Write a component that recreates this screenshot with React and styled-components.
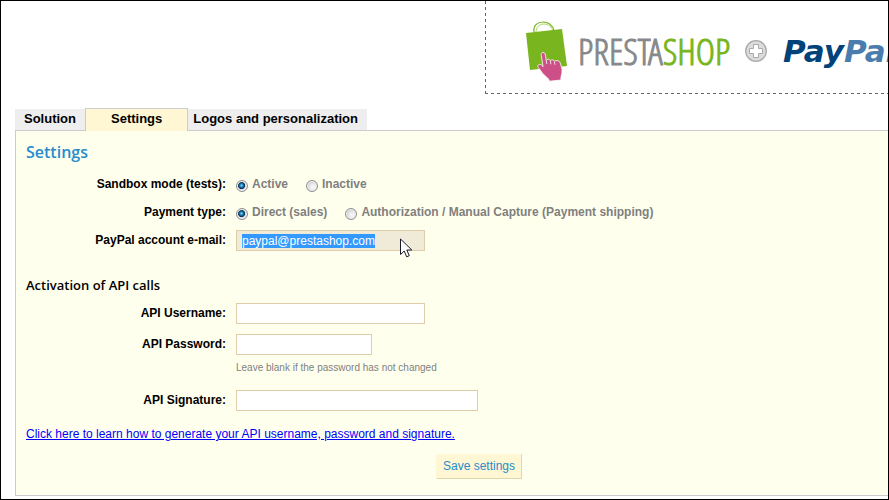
import React, { useEffect, useRef, useState } from "react";
import styled, { createGlobalStyle } from "styled-components";

const GlobalStyle = createGlobalStyle`
  * {
    box-sizing: border-box;
  }
  body {
    margin: 0;
    background: #fff;
    font-family: "Liberation Sans", Arial, sans-serif;
    font-size: 12px;
    color: #000;
  }
`;

const Page = styled.div`
  display: flex;
  flex-direction: column;
  min-height: 100vh;
  padding-bottom: 3px;
  border: 1px solid #000;
  overflow: hidden;
`;

const Banner = styled.header`
  display: flex;
  align-items: center;
  height: 93px;
  margin-left: 484px;
  padding: 7px 0 0 41px;
  background:
    repeating-linear-gradient(to bottom, #666 0 3px, transparent 3px 6px) left top / 1px 100% no-repeat,
    repeating-linear-gradient(to right, #666 0 3px, transparent 3px 6px) left bottom / 100% 1px no-repeat;
  overflow: hidden;
  white-space: nowrap;
  svg {
    flex: none;
  }
`;

const PrestaShopName = styled.span`
  flex: none;
  width: 151px;
  margin: 0 16px 0 10px;
  font-family: "Open Sans Condensed Light", "Open Sans Condensed", "Liberation Sans Narrow", sans-serif;
  font-size: 37px;
  font-weight: 300;
  line-height: 36px;
  color: #87888a;
  -webkit-text-stroke: 1px currentColor;
  em {
    font-style: normal;
    color: #78b51e;
  }
`;

const PayPalName = styled.span`
  flex: none;
  margin-left: 16px;
  font-family: "DejaVu Sans", sans-serif;
  font-size: 31px;
  font-weight: 700;
  font-style: italic;
  line-height: 36px;
  color: #00427a;
  span {
    color: #4a7dae;
  }
`;

const Tabs = styled.nav`
  display: flex;
  align-items: flex-end;
  height: 22px;
  margin: 14px 0 0 14px;
`;

const Tab = styled.button`
  position: relative;
  height: ${({ $active }) => ($active ? 23 : 21)}px;
  margin: 0 0 ${({ $active }) => ($active ? -1 : 0)}px;
  padding: ${({ $active }) => ($active ? "0 25px 4px" : "0 8px 4px")};
  border: 1px solid ${({ $active }) => ($active ? "#ccc" : "#eee")};
  border-bottom: 0;
  background: ${({ $active }) => ($active ? "#fff6d3" : "#eee")};
  font: bold 13px "Liberation Sans", Arial, sans-serif;
  color: #000;
  &:last-child {
    padding-left: 4px;
  }
`;

const Panel = styled.form`
  flex: 1;
  margin-left: 14px;
  padding: 11px 10px 15px;
  border: 1px solid #ccc;
  border-right: 0;
  background: #ffffee;
`;

const Title = styled.h2`
  margin: 0 0 12px;
  font: 600 16px/20px "Open Sans", sans-serif;
  color: #268ccd;
`;

const SectionTitle = styled.h3`
  margin: 24px 0 8px;
  font: 600 13px/20px "Open Sans", sans-serif;
`;

const Fields = styled.div`
  display: grid;
  gap: ${({ $gap }) => $gap}px;
`;

const Row = styled.div`
  display: grid;
  grid-template-columns: 200px 1fr;
  column-gap: 10px;
`;

const Name = styled.label`
  font-weight: bold;
  line-height: 20px;
  text-align: right;
`;

const Options = styled.div`
  display: flex;
  gap: 18px;
  height: 21px;
`;

const Option = styled.label`
  display: flex;
  align-items: flex-start;
  gap: 4px;
  font-weight: bold;
  line-height: 20px;
  color: #7f7f7f;
`;

const Radio = styled.input`
  appearance: none;
  width: 12px;
  height: 12px;
  margin: 6px 0 0;
  border: 1px solid #8e8f8f;
  border-radius: 50%;
  background: radial-gradient(circle at 60% 60%, #f4f4f4 20%, #b9bdc4 90%);
  box-shadow: inset 0 0 0 1px #f4f4f4;
  &:checked {
    background: radial-gradient(circle at 45% 45%, #8fe0f8 0, #1e83bb 20%, #0b2f4c 42%, #d5dadf 50%);
  }
`;

const TextBox = styled.input`
  display: block;
  width: ${({ $width }) => $width}px;
  height: 21px;
  padding: 0 5px;
  border: 1px solid #dfcca9;
  background: ${({ $filled }) => ($filled ? "#f0ead8" : "#fff")};
  font: 12px "Liberation Sans", Arial, sans-serif;
  color: #000;
  outline: none;
  &::selection {
    background: #3399ff;
    color: #fff;
  }
`;

const PointerArea = styled.div`
  position: relative;
`;

const Pointer = styled.svg`
  position: absolute;
  left: 164px;
  top: 8px;
  pointer-events: none;
`;

const Hint = styled.p`
  margin: 6px 0 5px;
  font-size: 10px;
  line-height: 14px;
  color: #7f7f7f;
`;

const HelpLink = styled.a`
  display: block;
  width: fit-content;
  margin: 15px 0 12px;
  line-height: 16px;
  color: #00f;
`;

const Actions = styled.div`
  padding-left: 410px;
`;

const SaveButton = styled.button`
  height: 25px;
  padding: 0 6px 2px;
  border: 1px solid #fff6d3;
  border-right-color: #dfd5af;
  border-bottom-color: #dfd5af;
  background: #fff6d3;
  font: 12px "Liberation Sans", Arial, sans-serif;
  color: #268ccd;
`;

const BagLogo = () => (
  <svg width="42" height="62" viewBox="0 0 42 62" aria-hidden="true">
    <path d="M8 12C7 5 12 2 17 2s10 3 11 9" fill="none" stroke="#78b51e" strokeWidth="1.2" />
    <path d="M10 12C10 7 14 4 18 4s8 3 9 7" fill="none" stroke="#a9d36c" strokeWidth="1" />
    <path d="M0 13L36 9l5 37-37 4z" fill="#78b51e" />
    <path
      d="M17 32.500c1.500 0 2.200 1 2.400 2.500l.8 5.500c1-1.800 3.600-1.600 4.200.2 1.200-1.400 3.400-1 4 .6 1.400-1.400 5.400-.8 5.800 1.600.6 2.600 2.400 5.600 1.800 9.600-.3 2.500-1.400 3.500-1 7.500l-11.500 1.200c-.6-2-1.600-3-3-4.200-3.500-2.500-5.500-6-8.200-9.500-1.500-2 .8-4.200 3-2.500l1.800 1.600-1.800-11c-.3-1.700.3-3.100 1.600-3.100z"
      fill="#cd4f87"
      stroke="#fff"
      strokeWidth="0.8"
    />
    <path d="M20.200 40.500l.6 3.500M24.400 41l.5 3.300M28.400 41.800l.5 3" stroke="#fff" strokeWidth="0.8" />
  </svg>
);

const PlusIcon = () => (
  <svg width="22" height="22" viewBox="0 0 22 22" aria-hidden="true">
    <circle cx="11" cy="11" r="10.300" fill="#dcdcdc" stroke="#aaa" strokeWidth="1.300" />
    <path d="M8.500 4.500h5v4h4v5h-4v4h-5v-4h-4v-5h4z" fill="#fff" stroke="#aaa" />
  </svg>
);

const tabs = ["Solution", "Settings", "Logos and personalization"];

const RadioRow = ({ label, name, options, value, onChange }) => (
  <Row role="radiogroup" aria-labelledby={name}>
    <Name as="span" id={name}>{label}</Name>
    <Options>
      {options.map((option) => (
        <Option key={option}>
          <Radio
            type="radio"
            name={name}
            checked={value === option}
            onChange={() => onChange(option)}
          />
          {option}
        </Option>
      ))}
    </Options>
  </Row>
);

const App = () => {
  const [activeTab, setActiveTab] = useState("Settings");
  const [sandbox, setSandbox] = useState("Active");
  const [payment, setPayment] = useState("Direct (sales)");
  const emailRef = useRef(null);

  useEffect(() => {
    emailRef.current.focus();
    emailRef.current.select();
  }, []);

  return (
    <>
      <GlobalStyle />
      <Page>
        <Banner>
          <BagLogo />
          <PrestaShopName>PRESTA<em>SHOP</em></PrestaShopName>
          <PlusIcon />
          <PayPalName>Pay<span>Pal</span></PayPalName>
        </Banner>
        <Tabs>
          {tabs.map((tab) => (
            <Tab key={tab} type="button" $active={tab === activeTab} onClick={() => setActiveTab(tab)}>
              {tab}
            </Tab>
          ))}
        </Tabs>
        <Panel onSubmit={(e) => e.preventDefault()}>
          <Title>Settings</Title>
          <Fields $gap={7}>
            <RadioRow
              label="Sandbox mode (tests):"
              name="sandbox_mode"
              options={["Active", "Inactive"]}
              value={sandbox}
              onChange={setSandbox}
            />
            <RadioRow
              label="Payment type:"
              name="payment_type"
              options={["Direct (sales)", "Authorization / Manual Capture (Payment shipping)"]}
              value={payment}
              onChange={setPayment}
            />
            <Row>
              <Name htmlFor="email">PayPal account e-mail:</Name>
              <PointerArea>
                <TextBox
                  id="email"
                  ref={emailRef}
                  type="text"
                  defaultValue="paypal@prestashop.com"
                  $width={189}
                  $filled
                />
                <Pointer width="13" height="20" viewBox="0 0 13 20" aria-hidden="true">
                  <path
                    d="M.5 1v15.500l3.700-3.500 2.500 5.800 2.600-1.100-2.500-5.700h5z"
                    fill="#fff"
                    stroke="#1a1a2e"
                  />
                </Pointer>
              </PointerArea>
            </Row>
          </Fields>
          <SectionTitle>Activation of API calls</SectionTitle>
          <Fields $gap={10}>
            <Row>
              <Name htmlFor="api_username">API Username:</Name>
              <TextBox id="api_username" type="text" $width={189} />
            </Row>
            <Row>
              <Name htmlFor="api_password">API Password:</Name>
              <div>
                <TextBox id="api_password" type="password" $width={136} />
                <Hint>Leave blank if the password has not changed</Hint>
              </div>
            </Row>
            <Row>
              <Name htmlFor="api_signature">API Signature:</Name>
              <TextBox id="api_signature" type="text" $width={242} />
            </Row>
          </Fields>
          <HelpLink href="#api-help">
            Click here to learn how to generate your API username, password and signature.
          </HelpLink>
          <Actions>
            <SaveButton type="submit">Save settings</SaveButton>
          </Actions>
        </Panel>
      </Page>
    </>
  );
};

export default App;
